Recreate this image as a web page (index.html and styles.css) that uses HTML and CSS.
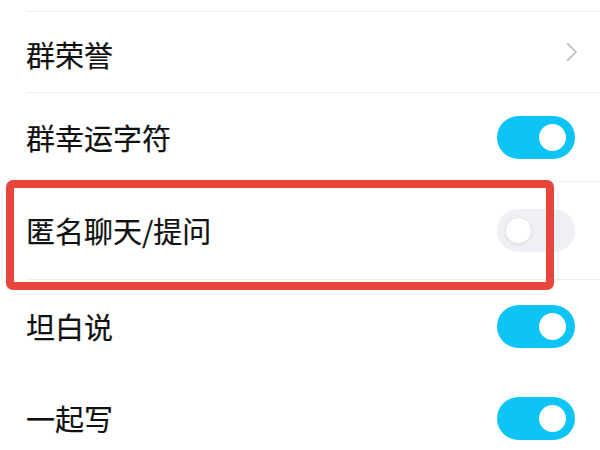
FILE: index.html
```html
<!DOCTYPE html>
<html lang="zh-CN">
<head>
<meta charset="utf-8">
<link rel="stylesheet" href="styles.css">
</head>
<body>
<div class="list">
  <div class="row row-top"></div>
  <div class="row row-1">
    <span class="label">群荣誉</span>
    <svg class="chevron" width="12" height="20" viewBox="0 0 12 20"><path d="M1.5 1.5 L10 10 L1.5 18.5" fill="none" stroke="#b8b8b8" stroke-width="1.6" stroke-linecap="round" stroke-linejoin="round"/></svg>
  </div>
  <div class="row row-2">
    <span class="label">群幸运字符</span>
    <span class="switch on"><span class="knob"></span></span>
  </div>
  <div class="row row-3">
    <span class="label">匿名聊天/提问</span>
    <span class="switch off"><span class="knob"></span></span>
    <div class="highlight"></div>
  </div>
  <div class="row row-4 plain">
    <span class="label">坦白说</span>
    <span class="switch on"><span class="knob"></span></span>
  </div>
  <div class="row row-5 plain">
    <span class="label">一起写</span>
    <span class="switch on"><span class="knob"></span></span>
  </div>
</div>
</body>
</html>
```
FILE: styles.css
```css
html, body {
  margin: 0;
  padding: 0;
  background: #ffffff;
  width: 600px;
  height: 450px;
  overflow: hidden;
}
.list {
  display: flex;
  flex-direction: column;
  font-family: "Noto Sans CJK SC", "Noto Sans", sans-serif;
}
.row {
  position: relative;
  display: flex;
  align-items: center;
  justify-content: space-between;
  margin-left: 26px;
  padding-right: 25px;
  border-bottom: 1px solid #ededed;
  box-sizing: border-box;
}
.row.plain { border-bottom: none; }
.row-top { height: 12px; }
.row-1 { height: 81px; padding-right: 22px; }
.row-1 .label { margin-top: 4px; }
.row-2 { height: 89px; }
.row-3 { height: 98px; }
.row-4 { height: 92px; }
.row-5 { height: 92px; }
.label {
  font-size: 29px;
  color: #111111;
  line-height: 1;
  -webkit-text-stroke: 0.2px #111111;
}
.chevron { display: block; }
.switch {
  position: relative;
  width: 78px;
  height: 43px;
  border-radius: 22px;
  box-sizing: border-box;
}
.switch.on { background: #0ec4f5; }
.switch.off { background: #eef0f5; }
.knob {
  position: absolute;
  top: 8px;
  width: 27px;
  height: 27px;
  border-radius: 50%;
  background: #ffffff;
  box-sizing: border-box;
}
.switch.on .knob { right: 9px; }
.switch.off .knob {
  left: 8px;
  border: 1px solid #e4e6ec;
  box-shadow: 0 1px 3px rgba(0, 0, 0, 0.08);
}
.highlight {
  position: absolute;
  left: -20px;
  top: -2px;
  width: 548px;
  height: 110px;
  border: 8px solid #e6463b;
  border-radius: 7px;
  box-sizing: border-box;
}
```
